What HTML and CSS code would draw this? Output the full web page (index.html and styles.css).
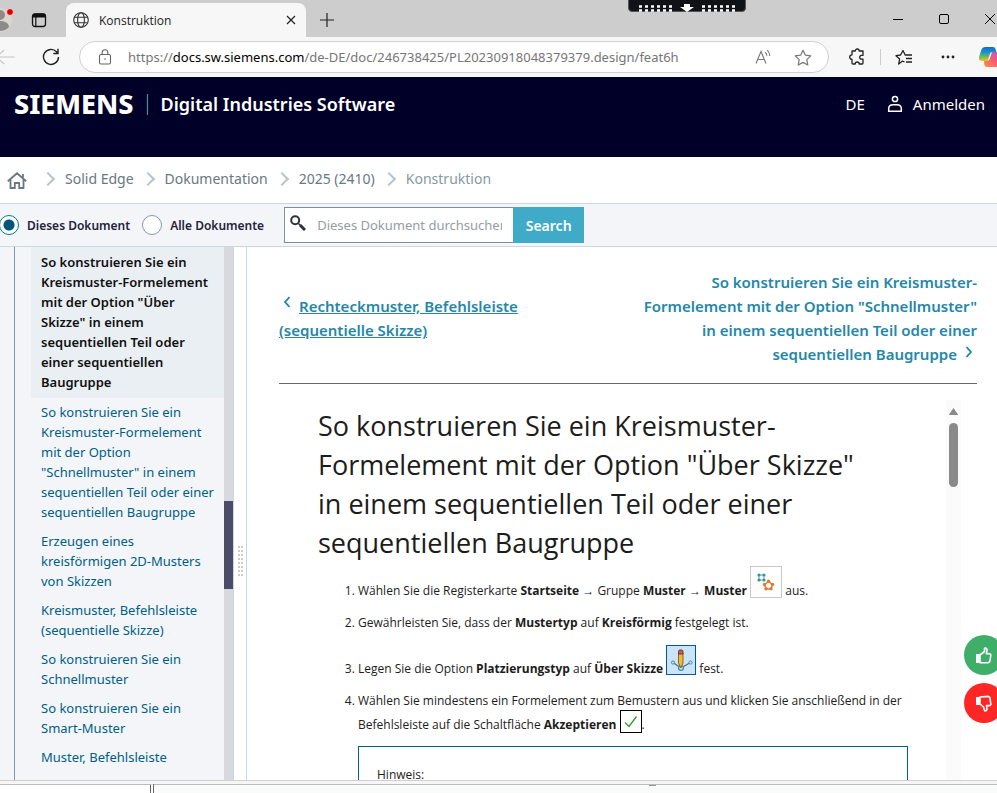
FILE: index.html
```html
<!DOCTYPE html>
<html lang="de">
<head>
	<meta charset="UTF-8">
	<title>Konstruktion</title>
	<link rel="stylesheet" href="styles.css">
</head>
<body>
	<div class="tabbar">
		<div class="profile">
			<svg width="24" height="24" viewBox="0 0 24 24"><circle cx="12" cy="12" r="12" fill="#d9d6d2"/><circle cx="12" cy="7" r="5" fill="#8d8a87"/><path d="M3 19c0-8 18-8 18 0a12 12 0 0 1-18 0z" fill="#8d8a87"/></svg>
			<span class="dot"></span>
		</div>
		<button class="icon-btn tab-menu" aria-label="Registerkarten">
			<svg width="16" height="16" viewBox="0 0 16 16"><rect x="1.5" y="2" width="13" height="12.5" rx="2.5" fill="none" stroke="#111" stroke-width="1.3"/><path d="M1.5 5V4a2 2 0 0 1 2-2h9a2 2 0 0 1 2 2v1z" fill="#111" stroke="#111"/><path d="M4.8 5v9" stroke="#111" stroke-width="1.2"/></svg>
		</button>
		<div class="tab">
			<svg width="16" height="16" viewBox="0 0 16 16" fill="none" stroke="#333" stroke-width="1.1"><circle cx="8" cy="8" r="7.3"/><ellipse cx="8" cy="8" rx="3.4" ry="7.3"/><path d="M1.3 5.3h13.4M1.3 10.7h13.4"/></svg>
			<span class="tab-title">Konstruktion</span>
			<button class="icon-btn" aria-label="Tab schließen">
				<svg width="10" height="10" viewBox="0 0 10 10"><path d="M1 1l8 8M9 1l-8 8" stroke="#222" stroke-width="1.2"/></svg>
			</button>
		</div>
		<button class="icon-btn new-tab" aria-label="Neuer Tab">
			<svg width="14" height="14" viewBox="0 0 14 14"><path d="M7 0v14M0 7h14" stroke="#222" stroke-width="1.2"/></svg>
		</button>
		<div class="win-controls">
			<button class="icon-btn" aria-label="Minimieren"><svg width="10" height="10" viewBox="0 0 10 10"><path d="M0 5.5h10" stroke="#000"/></svg></button>
			<button class="icon-btn" aria-label="Maximieren"><svg width="10" height="10" viewBox="0 0 10 10"><rect x=".5" y=".5" width="9" height="9" rx="1.5" fill="none" stroke="#000"/></svg></button>
			<button class="icon-btn" aria-label="Schließen"><svg width="10" height="10" viewBox="0 0 10 10"><path d="M0 0l10 10M10 0L0 10" stroke="#000"/></svg></button>
		</div>
	</div>
	<div class="remote-handle">
		<svg width="98" height="9" viewBox="0 0 98 9">
			<path d="M1 2.500h34M1 6.500h34M64 2.500h34M64 6.500h34" stroke="#fff" stroke-width="2.4" stroke-dasharray="3 3"/>
			<path d="M46 0h6v3h4l-7 5-7-5h4z" fill="#fff"/>
		</svg>
	</div>
	<div class="toolbar">
		<button class="icon-btn back" aria-label="Zurück">
			<svg width="20" height="16" viewBox="0 0 20 16" fill="none" stroke="#c4c4c4" stroke-width="1.2"><path d="M19.5 8H1M9 1L1.500 8 9 15"/></svg>
		</button>
		<button class="icon-btn reload" aria-label="Aktualisieren">
			<svg width="18" height="18" viewBox="0 0 18 18" fill="none" stroke="#222" stroke-width="1.4"><path d="M16.500 9a7.500 7.500 0 1 1-2-5.200l1.500 1.700M16 .8v4.700h-4.700"/></svg>
		</button>
		<div class="address">
			<svg class="lock" width="14" height="16" viewBox="0 0 14 16" fill="none" stroke="#666" stroke-width="1.1"><rect x="1.500" y="5.500" width="11" height="9.500" rx="1.500"/><path d="M4.200 5.500V3.600a2.800 2.800 0 0 1 5.600 0v1.900"/><circle cx="7" cy="10" r=".8" fill="#666" stroke="none"/></svg>
			<span class="url">https://<b>docs.sw.siemens.com</b>/de-DE/doc/246738425/PL20230918048379379.design/feat6h</span>
			<svg width="17" height="16" viewBox="0 0 17 16" fill="none" stroke="#777" stroke-width="1.100"><path d="M1 14.500L6 2.500l5 12M2.800 10.500h6.500M10.200 3.200q1.600 1.300 1.600 3.500M12.200 1.200q2.600 2.200 2.600 5.800"/></svg>
			<svg width="18" height="17" viewBox="0 0 18 17" fill="none" stroke="#777" stroke-width="1.200"><path d="M9 1.200l2.400 5 5.400.7-4 3.700 1 5.400L9 13.400 4.200 16l1-5.400-4-3.700 5.400-.7z" stroke-linejoin="round"/></svg>
		</div>
		<div class="tools">
			<button class="icon-btn" aria-label="Erweiterungen"><svg width="18" height="18" viewBox="0 0 18 18" fill="none" stroke="#222" stroke-width="1.300"><path d="M4 3h3.200a2 2 0 0 1 4 0H15v4.300h-1.400a1.900 1.900 0 0 0 0 3.800H15V15q0 1-1 1h-2.800a2 2 0 0 0-4 0H5q-1 0-1-1v-3.600a2.200 2.200 0 0 1 0-4.600z" stroke-linejoin="round"/></svg></button>
			<span class="tool-line"></span>
			<button class="icon-btn" aria-label="Favoriten"><svg width="18" height="17" viewBox="0 0 18 17" fill="none" stroke="#222" stroke-width="1.300"><path d="M9.500 13L7.500 12 3.700 15l.9-5L1 6.700l4.600-.7L8 1.500 10.200 6H17M11 9.500h6M11 13h6" stroke-linejoin="round"/></svg></button>
			<button class="icon-btn more" aria-label="Einstellungen"><svg width="14" height="4" viewBox="0 0 14 4" fill="#222"><circle cx="2" cy="2" r="1.400"/><circle cx="7" cy="2" r="1.400"/><circle cx="12" cy="2" r="1.400"/></svg></button>
			<button class="icon-btn" aria-label="Copilot"><svg width="22" height="20" viewBox="0 0 22 20">
				<defs>
					<linearGradient id="cool" x1="0" y1="0" x2="0" y2="1"><stop offset="0" stop-color="#1b63d6"/><stop offset=".4" stop-color="#159bc9"/><stop offset=".7" stop-color="#76b856"/><stop offset="1" stop-color="#f0c419"/></linearGradient>
					<linearGradient id="warm" x1="0" y1="1" x2="1" y2="0"><stop offset="0" stop-color="#ff9440"/><stop offset=".5" stop-color="#f65a72"/><stop offset="1" stop-color="#b557dc"/></linearGradient>
				</defs>
				<path d="M6 0h8q2 0 2.500 2l.8 3h-3.800q-2 0-2.600 2l-2.200 7H3q-4 0-3-4L2.500 2.500Q3.200 0 6 0z" fill="url(#cool)"/>
				<path d="M16 20H8q-2.500 0-2.800-3L5 14h3q2 0 2.700-2L13 5h6q4 0 3 4l-2.500 8q-.8 3-3.500 3z" fill="url(#warm)"/>
			</svg></button>
		</div>
	</div>

	<header class="site-header">
		<span class="logo">SIEMENS</span>
		<span class="division">Digital Industries Software</span>
		<a href="#" class="lang">DE</a>
		<a href="#" class="login">
			<svg width="16" height="18" viewBox="0 0 16 18" fill="none" stroke="#fff" stroke-width="1.500"><circle cx="8" cy="4" r="2.600"/><path d="M1.700 16.200v-2.400q0-4 4.300-4h4q4.300 0 4.300 4v2.400z"/></svg>
			Anmelden
		</a>
	</header>

	<nav class="breadcrumb">
		<a href="#" class="home" aria-label="Startseite"><svg width="20" height="17" viewBox="0 0 20 17" fill="none" stroke="#687884" stroke-width="1.800"><path d="M.8 9.200L10 1.300l9.200 7.900M3.500 7.500V16h4.300v-5h4.400v5h4.300V7.500M16 5.500V2"/></svg></a>
		<a href="#">Solid Edge</a>
		<a href="#">Dokumentation</a>
		<a href="#">2025 (2410)</a>
		<span class="here">Konstruktion</span>
	</nav>

	<form class="searchbar" onsubmit="return false">
		<label class="scope"><input type="radio" name="scope" checked>Dieses Dokument</label>
		<label class="scope"><input type="radio" name="scope">Alle Dokumente</label>
		<div class="search-box">
			<svg width="16" height="16" viewBox="0 0 16 16" fill="none" stroke="#2c3438"><circle cx="5.200" cy="5.200" r="4" stroke-width="2"/><path d="M8.500 8.500l2 2" stroke-width="1.500"/><path d="M10 10l5 5" stroke-width="3"/></svg>
			<input type="text" placeholder="Dieses Dokument durchsuchen" aria-label="Dieses Dokument durchsuchen">
		</div>
		<button class="search-btn">Search</button>
	</form>

	<div class="page">
		<aside class="sidebar">
			<ul class="toc">
				<li class="active"><a href="#">So konstruieren Sie ein<br>Kreismuster-Formelement<br>mit der Option "Über<br>Skizze" in einem<br>sequentiellen Teil oder<br>einer sequentiellen<br>Baugruppe</a></li>
				<li><a href="#">So konstruieren Sie ein<br>Kreismuster-Formelement<br>mit der Option<br>"Schnellmuster" in einem<br>sequentiellen Teil oder einer<br>sequentiellen Baugruppe</a></li>
				<li><a href="#">Erzeugen eines<br>kreisförmigen 2D-Musters<br>von Skizzen</a></li>
				<li><a href="#">Kreismuster, Befehlsleiste<br>(sequentielle Skizze)</a></li>
				<li><a href="#">So konstruieren Sie ein<br>Schnellmuster</a></li>
				<li><a href="#">So konstruieren Sie ein<br>Smart-Muster</a></li>
				<li><a href="#">Muster, Befehlsleiste</a></li>
			</ul>
			<div class="toc-scroll"><div class="thumb"></div></div>
		</aside>
		<div class="splitter"><div class="grip"></div></div>
		<main class="content">
			<div class="pager">
				<a href="#" class="prev"><svg width="8" height="12" viewBox="0 0 8 12"><path d="M6.500 1.200L2 6l4.500 4.800" fill="none" stroke="#2387aa" stroke-width="1.800"/></svg><span>Rechteckmuster, Befehlsleiste<br>(sequentielle Skizze)</span></a>
				<a href="#" class="next">So konstruieren Sie ein Kreismuster-<br>Formelement mit der Option "Schnellmuster"<br>in einem sequentiellen Teil oder einer<br>sequentiellen Baugruppe<svg width="8" height="12" viewBox="0 0 8 12"><path d="M1.500 1.200L6 6l-4.500 4.800" fill="none" stroke="#2387aa" stroke-width="1.800"/></svg></a>
			</div>
			<div class="doc">
				<article class="topic">
					<h1>So konstruieren Sie ein Kreismuster-<br>Formelement mit der Option "Über Skizze"<br>in einem sequentiellen Teil oder einer<br>sequentiellen Baugruppe</h1>
					<ol>
						<li>Wählen Sie die Registerkarte <b>Startseite</b> → Gruppe <b>Muster</b> → <b>Muster</b>
							<svg class="pic" width="32" height="32" viewBox="0 0 32 32"><rect x=".5" y=".5" width="31" height="31" fill="#fff" stroke="#c8c8c8"/>
								<g fill="#3b8fab"><circle cx="9" cy="9" r="1.600"/><circle cx="14" cy="9" r="1.600"/><circle cx="9" cy="14" r="1.600"/><circle cx="14" cy="14" r="1.600"/></g><path d="M9 9h5v5H9z" fill="none" stroke="#3b8fab" stroke-width=".8"/>
								<path d="M18.500 15.500l4 3-1.500 4.500h-5l-1.500-4.500z" fill="none" stroke="#de7b30" stroke-width="1.400"/><g fill="#de7b30"><circle cx="18.500" cy="15.300" r="1.700"/><circle cx="22.500" cy="18.500" r="1.700"/><circle cx="21" cy="22.700" r="1.700"/><circle cx="16" cy="22.700" r="1.700"/><circle cx="14.500" cy="18.500" r="1.700"/></g></svg>
							aus.</li>
						<li>Gewährleisten Sie, dass der <b>Mustertyp</b> auf <b>Kreisförmig</b> festgelegt ist.</li>
						<li>Legen Sie die Option <b>Platzierungstyp</b> auf <b>Über Skizze</b>
							<svg class="pic sketch" width="30" height="30" viewBox="0 0 30 30"><rect x=".5" y=".5" width="29" height="29" fill="#cce4f7" stroke="#00559b"/>
								<path d="M7 17.500l8 5.500 9.500-5.500" fill="none" stroke="#666" stroke-width="1.200"/><circle cx="7" cy="17.500" r="1.600" fill="#cce4f7" stroke="#3b8fab"/><circle cx="24.500" cy="17.500" r="1.600" fill="#cce4f7" stroke="#3b8fab"/><circle cx="15" cy="23" r="2.400" fill="#cce4f7" stroke="#3b8fab" stroke-width="1.300"/>
								<path d="M12.500 8h4.500v10l-2.200 5-2.300-5z" fill="#f5b82e" stroke="#6b5020" stroke-width=".8"/><path d="M12.500 9V6.500q0-1.500 1.500-1.500h1.500q1.500 0 1.500 1.500V9z" fill="#cc5a52" stroke="#733"/></svg>
							fest.</li>
						<li>Wählen Sie mindestens ein Formelement zum Bemustern aus und klicken Sie anschließend in der<br>Befehlsleiste auf die Schaltfläche <b>Akzeptieren</b>
							<svg class="pic accept" width="22" height="23" viewBox="0 0 22 23"><rect x=".5" y=".5" width="21" height="22" fill="#fff" stroke="#000"/><path d="M5 12.500l4 4L16.500 6.500" fill="none" stroke="#3a9b35" stroke-width="1.400"/></svg>.
							<div class="note">Hinweis:</div>
						</li>
					</ol>
				</article>
				<div class="doc-scroll">
					<svg width="9" height="7" viewBox="0 0 9 7"><path d="M4.500 0L9 6.500q0 .5-.5.5h-8Q0 7 0 6.500z" fill="#8a8a8a"/></svg>
					<div class="thumb"></div>
				</div>
			</div>
		</main>
	</div>

	<div class="bottom-frame">
		<div class="pane-left"></div>
		<div class="pane-right"><div class="pane-grip"></div></div>
	</div>

	<div class="feedback">
		<button class="up" aria-label="Hilfreich"><svg width="16" height="17" viewBox="0 0 16 17"><path d="M4 8l4.500-3.500V1.800q0-1 1-.8 2 .4 1.300 3.500l-.4 2.200h3q1.600.2 1.400 1.800l-.8 5.200q-.3 2-2.200 2H4z" fill="none" stroke="#fff" stroke-width="1.600" stroke-linejoin="round"/><path d="M0 7h4v9H0z" fill="#fff"/></svg></button>
		<button class="down" aria-label="Nicht hilfreich"><svg width="16" height="17" viewBox="0 0 16 17"><path d="M4 9l3.500 3 1 3.200q.3 1 1.300.7 1.500-.7 1-3.300l-.3-2h2.900q1.600-.2 1.400-1.800L14 3.400q-.3-2-2.200-2L4 2z" fill="none" stroke="#fff" stroke-width="1.600" stroke-linejoin="round"/><path d="M0 2h4v8H0z" fill="#fff"/></svg></button>
	</div>
</body>
</html>
```
FILE: styles.css
```css
*{
	box-sizing: border-box;
	padding:0;
	margin:0;
}
body{
	display: flex;
	flex-direction: column;
	height:100vh;
	overflow: hidden;
	background:#fff;
	font-family: "Noto Sans", sans-serif;
	font-size: 13px;
}
a{
	text-decoration: none;
	color:inherit;
}
button{
	border:0;
	background:none;
	font-family: inherit;
}
svg{
	flex:none;
}
.icon-btn{
	display: flex;
	flex:none;
	align-items: center;
	justify-content: center;
}

/* browser */
.tabbar{
	display: flex;
	flex:none;
	height:37px;
	background:#cdcdcd;
}
.profile{
	position: relative;
	width:24px;
	margin:8px 0 0 -12px;
}
.dot{
	position: absolute;
	top:0;
	right:-2px;
	width:8px;
	height:8px;
	border:1px solid #f3dada;
	border-radius: 50%;
	background:#e00000;
}
.tab-menu{
	width:54px;
	padding-top:3px;
}
.tab{
	display: flex;
	align-items: center;
	gap:10px;
	width:240px;
	margin-top:3px;
	padding:0 10px 0 7px;
	border-radius: 8px 8px 0 0;
	background:#f7f7f7;
}
.tab-title{
	flex:1;
	font-family: "Open Sans", sans-serif;
	font-size: 12px;
	color:#1b1b1b;
}
.new-tab{
	width:42px;
	padding-top:3px;
}
.win-controls{
	display: flex;
	margin-left:auto;
	margin-right:-16px;
}
.win-controls .icon-btn{
	width:46px;
}
.remote-handle{
	position: fixed;
	top:-2px;
	left:628px;
	width:118px;
	height:14px;
	padding:0 9px;
	border:1px solid #555;
	border-radius: 0 0 4px 4px;
	background:#111217;
}
.toolbar{
	display: flex;
	flex:none;
	align-items: center;
	height:40px;
	background:#f7f7f7;
}
.back{
	margin-left:-5px;
}
.reload{
	width:64px;
	padding-left:8px;
}
.address{
	display: flex;
	flex:1;
	align-items: center;
	gap:22px;
	height:32px;
	padding:0 16px 0 18px;
	border:1px solid #d0d0d0;
	border-radius: 16px;
	background:#fff;
}
.lock{
	margin-right:-6px;
}
.url{
	flex:1;
	font-size: 13px;
	color:#767676;
	white-space: nowrap;
}
.url b{
	font-weight: 400;
	color:#000;
}
.tools{
	display: flex;
	align-items: center;
	gap:14px;
	margin-right:-4px;
	padding-left:19px;
}
.more{
	margin:0 10px 0 14px;
}
.tool-line{
	width:1px;
	height:16px;
	background:#ccc;
}

/* site header */
.site-header{
	display: flex;
	flex:none;
	align-items: flex-start;
	height:80px;
	padding:13px 12px 0 14px;
	background:#000028;
	color:#fff;
	font-size: 15px;
	line-height: 28px;
}
.logo{
	font-size: 27px;
	font-weight: 800;
}
.division{
	display: flex;
	align-items: center;
	margin-right:auto;
	font-size: 18px;
	font-weight: 600;
}
.division:before{
	content:"";
	width:1px;
	height:21px;
	margin:0 13px;
	background:#00b3b3;
}
.login{
	display: flex;
	align-items: center;
	gap:10px;
	margin-left:22px;
}

.breadcrumb{
	display: flex;
	flex:none;
	align-items: center;
	height:46px;
	padding:0 0 3px 7px;
	font-size: 14px;
	color:#687884;
}
.breadcrumb > *{
	display: flex;
	align-items: center;
}
.breadcrumb > * + *:before{
	content:"";
	width:8px;
	height:8px;
	margin:0 12px 0 9px;
	border:solid #b3c4cf;
	border-width: 2px 2px 0 0;
	transform: rotate(45deg);
}
.breadcrumb .home{
	padding:3px 7px 0 0;
}
.breadcrumb .here{
	color:#8799a6;
}

.searchbar{
	display: flex;
	flex:none;
	align-items: center;
	height:44px;
	border:solid #cbd8df;
	border-width: 1px 0;
	background:#f3f5f8;
	color:#23233c;
}
.scope{
	display: flex;
	align-items: center;
	gap:8px;
	margin-right:12px;
	font-size: 12px;
	font-weight: 600;
}
.scope input{
	appearance: none;
	width:20px;
	height:20px;
	border:1px solid #8899aa;
	border-radius: 50%;
	background:#fff;
}
.scope:first-child input{
	margin-left:-1px;
}
.scope input:checked{
	border-color:#007993;
	background:radial-gradient(#005578 5px, #fff 6px);
}
.search-box{
	display: flex;
	width:229px;
	height:36px;
	margin-left:8px;
	padding:7px 11px 0 5px;
	border:1px solid #7d8fa0;
	border-right:0;
	background:#fff;
}
.search-box input{
	flex:1;
	min-width:0;
	height:20px;
	margin-left:11px;
	border:0;
	font-family: inherit;
	font-size: 13px;
}
.search-box input::placeholder{
	color:#929da5;
}
.search-btn{
	width:71px;
	height:36px;
	background:#40aac9;
	color:#fff;
	font-size: 14px;
	font-weight: 600;
}

/* page */
.page{
	display: flex;
	flex:1;
	min-height:0;
}
.sidebar{
	display: flex;
	flex:none;
	width:234px;
	padding-left:14px;
	border-right:1px solid #cbd8df;
	background:#f3f5f8;
	overflow: hidden;
}
.toc{
	flex:1;
	padding-left:16px;
	border-left:1px solid #8297a8;
	list-style: none;
	line-height: 20px;
	color:#005f87;
	white-space: nowrap;
}
.toc li{
	padding:4px 0 5px 10px;
}
.toc .active{
	padding:5px 0 6px 10px;
	background:#eaeff3;
	color:#111;
	font-weight: 600;
}
.toc-scroll{
	width:9px;
	padding-top:254px;
	background:#d8d8df;
}
.toc-scroll .thumb{
	height:88px;
	background:#4c4c68;
}
.splitter{
	display: flex;
	flex:none;
	justify-content: center;
	width:13px;
	padding-top:299px;
	border-right:1px solid #cbd8df;
}
.grip{
	width:6px;
	height:30px;
	background:conic-gradient(#ccc 25%, transparent 0 75%, transparent 0);
	background-size: 3px 4px;
}
.content{
	display: flex;
	flex:1;
	flex-direction: column;
	min-width:0;
	padding:0 20px 0 32px;
}
.pager{
	display: flex;
	flex:none;
	align-items: center;
	justify-content: space-between;
	padding:23px 0 17px;
	border-bottom:1px solid #66667e;
	font-size: 15px;
	font-weight: 600;
	line-height: 24px;
	color:#2387aa;
}
.prev span{
	text-decoration: underline;
}
.prev svg{
	margin:0 8px 4px 4px;
}
.next{
	text-align: right;
}
.next svg{
	margin:0 4px 2px 8px;
}
.doc{
	display: flex;
	flex:1;
	min-height:0;
	margin:16px 16px 0 0;
	overflow: hidden;
}
.topic{
	flex:1;
	padding:6px 38px 0 39px;
	font-family: "Open Sans", sans-serif;
	font-size: 12px;
	line-height: 24px;
	color:#1c1c1c;
}
.topic h1{
	margin-bottom:4px;
	font-size: 27px;
	font-weight: 400;
	line-height: 39px;
	white-space: nowrap;
}
.topic ol{
	padding-left:40px;
}
.topic li{
	margin-bottom:8px;
	white-space: nowrap;
}
.pic{
	vertical-align: -3px;
}
.sketch{
	margin-top:2px;
	vertical-align: -2px;
}
.accept{
	margin:-4px 0;
	vertical-align: 0;
}
.note{
	height:100px;
	margin-top:9px;
	padding:16px 18px;
	border:1px solid #006182;
}
.doc-scroll{
	display: flex;
	flex-direction: column;
	align-items: center;
	gap:8px;
	width:15px;
	padding-top:8px;
	background:#fbfbfb;
}
.doc-scroll .thumb{
	width:9px;
	height:64px;
	border-radius: 5px;
	background:#8a8a8a;
}

.bottom-frame{
	display: flex;
	flex:none;
	height:13px;
	padding-top:3px;
	border-top:1px solid #d0d0d0;
	background:#f6f6f6;
}
.pane-left{
	width:154px;
	border-top:1px solid #bbb;
	border-right:4px double #666;
	background:#fff;
}
.pane-right{
	flex:1;
	border-top:1px solid #bbb;
	background:#f9fafa;
}
.pane-grip{
	width:7px;
	height:1px;
	margin:0 auto;
	margin-left:495px;
	background:#999;
}

.feedback{
	position: fixed;
	right:-7px;
	top:635px;
	display: flex;
	flex-direction: column;
	gap:8px;
}
.feedback button{
	display: flex;
	align-items: center;
	justify-content: center;
	width:40px;
	height:40px;
	border-radius: 50%;
}
.up{
	background:#3fae69;
}
.down{
	background:#ff2626;
}
```
